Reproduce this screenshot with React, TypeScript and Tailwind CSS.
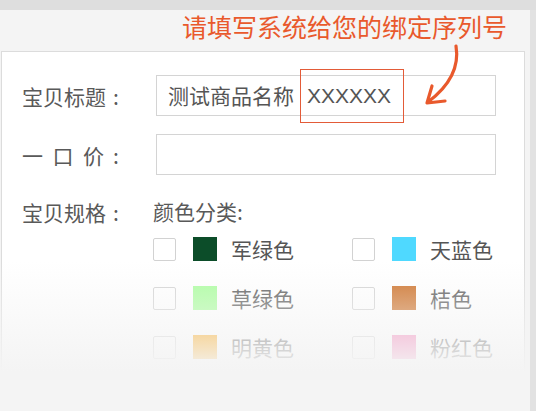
import React from 'react'

interface ColorOption {
  name: string
  swatch: string
}

const colorOptions: ColorOption[] = [
  { name: '军绿色', swatch: 'bg-[#0c4d29]' },
  { name: '天蓝色', swatch: 'bg-[#4fd9ff]' },
  { name: '草绿色', swatch: 'bg-[#a9fe9c]' },
  { name: '桔色', swatch: 'bg-[#cc6e24]' },
  { name: '明黄色', swatch: 'bg-[#fa9f00]' },
  { name: '粉红色', swatch: 'bg-[#f47ab4]' },
]

const FieldLabel: React.FC<{ text: string; spaced?: boolean; width?: string }> = ({
  text,
  spaced,
  width = 'w-[134px]',
}) => (
  <div className={`flex shrink-0 items-center ${width} text-[21px] leading-[28px] text-[#595959]`}>
    <span className={`w-[91px] whitespace-nowrap ${spaced ? 'tracking-[9.5px]' : ''}`}>{text}</span>
    <span>:</span>
  </div>
)

const App: React.FC = () => {
  return (
    <div className="relative h-[411px] w-[536px] overflow-hidden bg-[#f4f4f4] font-['Noto_Sans_CJK_SC',sans-serif]">
      <div className="h-[10px] bg-[#dedede]" />

      <div className="flex h-[401px]">
        <div className="w-[530px]">
          {/* hint */}
          <div className="h-[41px] pl-[182px] pt-[4px] text-[25px] leading-[25px] text-[#e9592c]">
            请填写系统给您的绑定序列号
          </div>

          {/* form card */}
          <div className="ml-[1px] h-[330px] w-[524px] border border-[#dcdcdc] bg-white pl-[20px] pt-[23px]">
            <div className="flex h-[41px] items-center">
              <FieldLabel text="宝贝标题" />
              <div className="flex h-[41px] w-[340px] items-center border border-[#d4d4d4] pl-[11px] text-[21px] text-[#555]">
                <span>测试商品名称</span>
                <span className="ml-[13px] font-['Liberation_Sans','Noto_Sans_CJK_SC',sans-serif]">XXXXXX</span>
              </div>
            </div>

            <div className="mt-[18px] flex h-[41px] items-center">
              <FieldLabel text="一口价" spaced />
              <div className="h-[41px] w-[340px] border border-[#d4d4d4]" />
            </div>

            <div className="mt-[22px] flex items-start">
              <div className="pt-[1px]">
                <FieldLabel text="宝贝规格" width="w-[131px]" />
              </div>
              <div>
                <div className="text-[21px] leading-[28px] text-[#595959]">颜色分类:</div>
                <div className="mt-[12px] grid grid-cols-[199px_199px] gap-y-[25px]">
                  {colorOptions.map((opt) => (
                    <div key={opt.name} className="flex h-[24px] items-center">
                      <div className="h-[23px] w-[23px] rounded-[2px] border-[1.5px] border-[#d2d2d2] bg-white" />
                      <div className={`ml-[17px] h-[24px] w-[24px] ${opt.swatch}`} />
                      <span className="ml-[14px] text-[21px] leading-[24px] text-[#555]">{opt.name}</span>
                    </div>
                  ))}
                </div>
              </div>
            </div>
          </div>
        </div>
        <div className="w-[6px] bg-[#e2e2e2]" />
      </div>

      {/* fade out at the bottom */}
      <div className="absolute left-0 top-[261px] h-[111px] w-[530px] bg-linear-to-b from-[#f4f4f4]/0 to-[#f4f4f4]" />
      <div className="absolute bottom-0 left-0 top-[372px] w-[530px] bg-[#f4f4f4]" />

      {/* highlight box */}
      <div className="absolute left-[300px] top-[69px] h-[54px] w-[104px] border-[1.5px] border-[#e35b38]" />

      {/* arrow */}
      <svg className="pointer-events-none absolute left-0 top-0" width="536" height="411" viewBox="0 0 536 411">
        <path d="M456 46 C459 64 452 84 428 102" fill="none" stroke="#e9592c" strokeWidth="3.2" strokeLinecap="round" />
        <path d="M432 86 L427 103 L445 101" fill="none" stroke="#e9592c" strokeWidth="3.2" strokeLinecap="round" strokeLinejoin="round" />
      </svg>
    </div>
  )
}

export default App
